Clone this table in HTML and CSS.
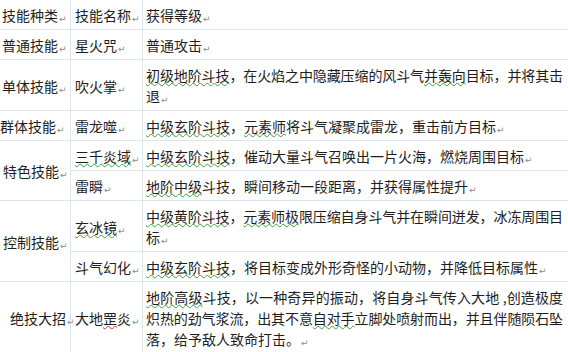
FILE: index.html
```html
<!DOCTYPE html>
<html lang="zh-CN">
<head>
<meta charset="utf-8">
<title>技能表</title>
<link rel="stylesheet" href="styles.css">
</head>
<body>
<table class="skills">
  <colgroup>
    <col class="c-type">
    <col class="c-name">
    <col class="c-desc">
  </colgroup>
  <tbody>
    <tr class="head">
      <td class="type">技能种类<span class="pm">↵</span></td>
      <td class="name">技能名称<span class="pm">↵</span></td>
      <td class="desc">获得等级<span class="pm">↵</span></td>
    </tr>
    <tr>
      <td class="type">普通技能<span class="pm">↵</span></td>
      <td class="name">星火咒<span class="pm">↵</span></td>
      <td class="desc">普通攻击<span class="pm">↵</span></td>
    </tr>
    <tr>
      <td class="type">单体技能<span class="pm">↵</span></td>
      <td class="name">吹火掌<span class="pm">↵</span></td>
      <td class="desc"><span class="jl"><span class="gw">初级地阶斗技</span>，在火焰之中隐藏压缩的风斗气<span class="gw">并轰向</span>目标，并将其击</span>退<span class="pm">↵</span></td>
    </tr>
    <tr>
      <td class="type ind-0">群体技能<span class="pm">↵</span></td>
      <td class="name">雷龙噬<span class="pm">↵</span></td>
      <td class="desc"><span class="gw">中级玄阶斗技</span>，<span class="gw">元素师</span>将斗气凝聚成雷龙，重击前方目标<span class="pm">↵</span></td>
    </tr>
    <tr>
      <td class="type ind-3" rowspan="2">特色技能<span class="pm">↵</span></td>
      <td class="name"><span class="gw">三千炎域</span><span class="pm">↵</span></td>
      <td class="desc"><span class="gw">中级玄阶斗技</span>，催动大量斗气召唤出一片火海，燃烧周围目标<span class="pm">↵</span></td>
    </tr>
    <tr>
      <td class="name">雷瞬<span class="pm">↵</span></td>
      <td class="desc"><span class="gw">地阶中级</span>斗技，瞬间移动一段距离，并获得属性提升<span class="pm">↵</span></td>
    </tr>
    <tr>
      <td class="type ind-3" rowspan="2">控制技能<span class="pm">↵</span></td>
      <td class="name"><span class="gw">玄冰镜</span><span class="pm">↵</span></td>
      <td class="desc"><span class="jl"><span class="gw">中级黄阶斗技</span>，<span class="gw">元素师极</span>限压缩自身斗气并在瞬间迸发，冰冻周围目</span>标<span class="pm">↵</span></td>
    </tr>
    <tr>
      <td class="name">斗气幻化<span class="pm">↵</span></td>
      <td class="desc"><span class="gw">中级玄阶斗技</span>，将目标变成外形奇怪的小动物，并降低目标属性<span class="pm">↵</span></td>
    </tr>
    <tr>
      <td class="type ind-10">绝技大招<span class="pm">↵</span></td>
      <td class="name">大地<span class="rw">罡</span>炎<span class="pm">↵</span></td>
      <td class="desc"><span class="jl"><span class="gw">地阶高级</span>斗技，以一种奇异的振动，将自身斗气传入大地 ,创造极度</span><span class="jl">炽热的劲气浆流，出其不意<span class="gw">自对手</span>立脚处喷射而出，并且伴随陨石坠</span>落，给予敌人致命打击。<span class="pm">↵</span></td>
    </tr>
  </tbody>
</table>
</body>
</html>
```
FILE: styles.css
```css
html, body {
  margin: 0;
  padding: 0;
  background: #ffffff;
  overflow: hidden;
}

.skills {
  table-layout: fixed;
  width: 568px;
  border-collapse: separate;
  border-spacing: 0;
  font-family: "Noto Sans CJK SC", "Noto Sans CJK TC", sans-serif;
  font-size: 14px;
  line-height: 21px;
  color: #1e1e1e;
}

.c-type { width: 71px; }
.c-name { width: 72px; }
.c-desc { width: 425px; }

.skills td {
  height: 21px;
  padding: 5px 2px 3px 4px;
  vertical-align: middle;
  text-align: left;
  white-space: nowrap;
  border-right: 1px solid #dde5ec;
  border-bottom: 1px solid #dde5ec;
}

.skills td.type { padding-left: 2px; }
.skills td.ind-0 { padding-left: 0; }
.skills td.ind-3 { padding-left: 3px; }
.skills td.ind-10 { padding-left: 10px; }

.skills td.desc {
  padding-left: 3px;
  padding-right: 2px;
  border-right: none;
  white-space: normal;
  text-align: left;
}

.jl {
  display: block;
  margin-right: 3px;
  white-space: nowrap;
  letter-spacing: -0.12px;
  text-align: justify;
  text-align-last: justify;
}

.pm {
  font-family: "DejaVu Sans", sans-serif;
  font-size: 9px;
  line-height: 0;
  color: #8c8c8c;
  margin-left: 1px;
  vertical-align: -1px;
}

.gw {
  text-decoration: underline wavy #3f9f3f;
  text-decoration-thickness: 1px;
  text-underline-offset: 1px;
}

.rw {
  text-decoration: underline wavy #d83030;
  text-decoration-thickness: 1px;
  text-underline-offset: 1px;
}
```
